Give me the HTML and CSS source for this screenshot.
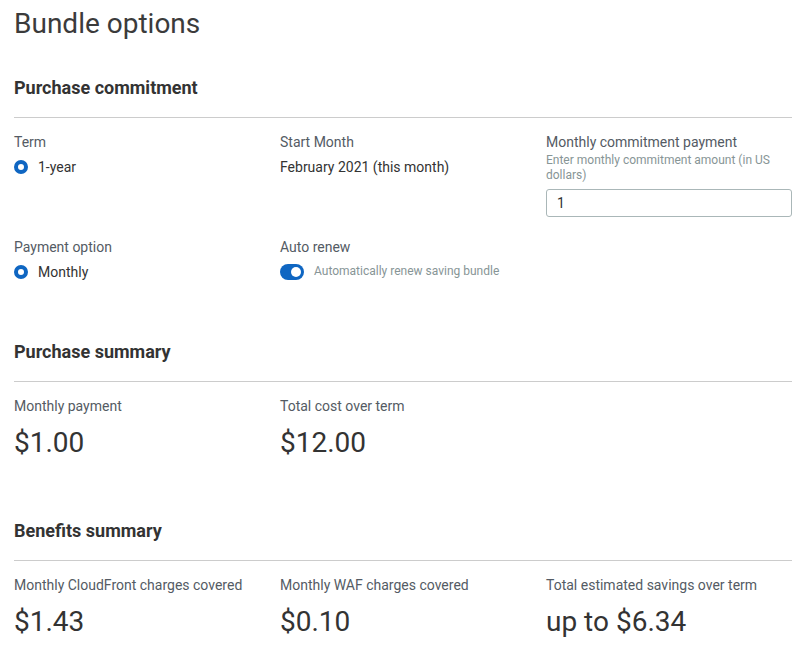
FILE: index.html
```html
<!DOCTYPE html>
<html lang="en">

<head>
    <meta charset="UTF-8">
    <meta name="viewport" content="width=device-width, initial-scale=1.0">
    <title>Bundle options</title>
    <link rel="stylesheet" href="styles.css">
</head>

<body>
    <div class="page">
        <h1 class="title">Bundle options</h1>

        <!-- Purchase commitment -->
        <div class="section">
            <h2 class="section-title">Purchase commitment</h2>
            <div class="grid">
                <div class="field">
                    <div class="label">Term</div>
                    <div class="radio-row"><span class="radio"></span>1-year</div>
                </div>
                <div class="field">
                    <div class="label">Start Month</div>
                    <div class="value">February 2021 (this month)</div>
                </div>
                <div class="field">
                    <div class="label">Monthly commitment payment</div>
                    <div class="help">Enter monthly commitment amount (in US dollars)</div>
                    <input class="amount" type="text" value="1">
                </div>
                <div class="field">
                    <div class="label">Payment option</div>
                    <div class="radio-row"><span class="radio"></span>Monthly</div>
                </div>
                <div class="field">
                    <div class="label">Auto renew</div>
                    <div class="toggle-row">
                        <span class="toggle"><span class="knob"></span></span>
                        <span class="toggle-text">Automatically renew saving bundle</span>
                    </div>
                </div>
            </div>
        </div>

        <!-- Purchase summary -->
        <div class="section">
            <h2 class="section-title">Purchase summary</h2>
            <div class="grid">
                <div class="field">
                    <div class="label">Monthly payment</div>
                    <div class="big">$1.00</div>
                </div>
                <div class="field">
                    <div class="label">Total cost over term</div>
                    <div class="big">$12.00</div>
                </div>
            </div>
        </div>

        <!-- Benefits summary -->
        <div class="section">
            <h2 class="section-title">Benefits summary</h2>
            <div class="grid">
                <div class="field">
                    <div class="label">Monthly CloudFront charges covered</div>
                    <div class="big">$1.43</div>
                </div>
                <div class="field">
                    <div class="label">Monthly WAF charges covered</div>
                    <div class="big">$0.10</div>
                </div>
                <div class="field">
                    <div class="label">Total estimated savings over term</div>
                    <div class="big">up to $6.34</div>
                </div>
            </div>
        </div>
    </div>
</body>

</html>
```

FILE: styles.css
```css
* {
    margin: 0;
    padding: 0;
    box-sizing: border-box;
}

body {
    background-color: #ffffff;
    font-family: Roboto, "Liberation Sans", Arial, sans-serif;
    color: #333333;
}

.page {
    width: 792px;
    padding-left: 14px;
}

.title {
    font-size: 28px;
    font-weight: 400;
    line-height: 36px;
    margin-top: 6px;
    color: #3b3b3b;
}

.section {
    margin-top: 34px;
}

.section + .section {
    margin-top: 58px;
}

/* Section heading with rule below */
.section-title {
    font-size: 18px;
    font-weight: 700;
    line-height: 24px;
    padding-bottom: 17px;
    border-bottom: 1px solid #cccccc;
    color: #333333;
}

.grid {
    display: grid;
    grid-template-columns: repeat(3, 1fr);
    column-gap: 20px;
    row-gap: 20px;
    margin-top: 14px;
}

.label {
    font-size: 14px;
    line-height: 20px;
    color: #545b64;
}

.value {
    font-size: 14px;
    line-height: 20px;
    margin-top: 5px;
    color: #333333;
}

.help {
    font-size: 12px;
    line-height: 15px;
    margin-top: 1px;
    color: #879596;
}

/* Radio button */
.radio-row {
    display: flex;
    align-items: center;
    font-size: 14px;
    line-height: 20px;
    margin-top: 5px;
    color: #333333;
}

.radio {
    width: 14px;
    height: 14px;
    border-radius: 50%;
    border: 4px solid #0f66c2;
    background-color: #ffffff;
    margin-right: 10px;
}

/* Input */
.amount {
    width: 100%;
    height: 28px;
    margin-top: 6px;
    border: 1px solid #aab7b8;
    border-radius: 3px;
    padding-left: 10px;
    font-family: inherit;
    font-size: 14px;
    color: #333333;
}

/* Toggle switch */
.toggle-row {
    display: flex;
    align-items: center;
    margin-top: 4px;
}

.toggle {
    width: 24px;
    height: 16px;
    border-radius: 8px;
    background-color: #0f66c2;
    display: flex;
    align-items: center;
    justify-content: flex-end;
    padding-right: 3px;
    margin-right: 10px;
    margin-top: 3px;
}

.knob {
    width: 10px;
    height: 10px;
    border-radius: 50%;
    background-color: #ffffff;
}

.toggle-text {
    font-size: 12px;
    line-height: 16px;
    color: #879596;
}

.big {
    font-size: 28px;
    line-height: 36px;
    margin-top: 9px;
    color: #333333;
}
```
